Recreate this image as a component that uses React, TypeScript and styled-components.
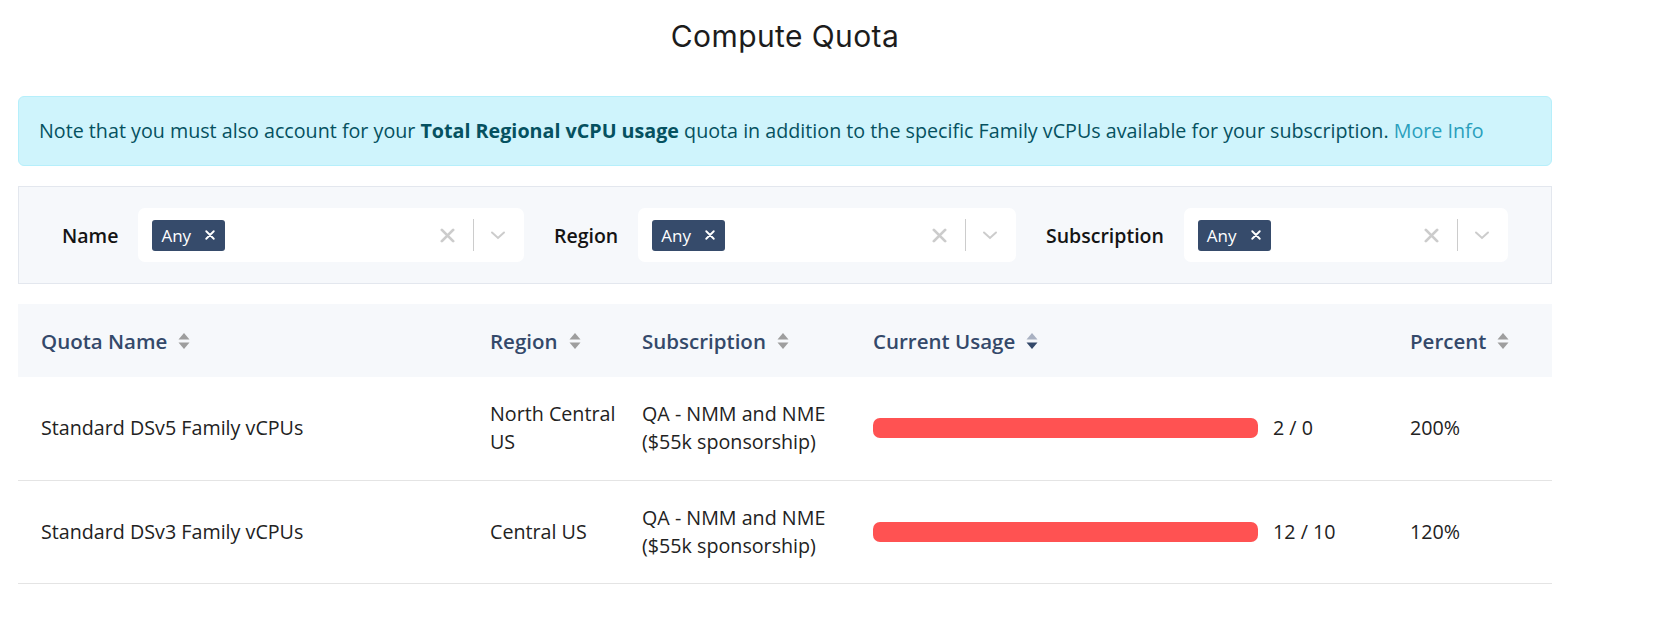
import React from "react";
import styled, { createGlobalStyle } from "styled-components";

const GlobalStyle = createGlobalStyle`
  body {
    margin: 0;
    background: #ffffff;
    font-family: "Open Sans", "Liberation Sans", sans-serif;
    color: #212529;
  }
`;

const Page = styled.div`
  width: 1534px;
  margin-left: 18px;
  padding-top: 16px;
`;

const Title = styled.h1`
  margin: 0 0 40px;
  text-align: center;
  font-family: "Inter", "Noto Sans", sans-serif;
  font-weight: 400;
  font-size: 30px;
  line-height: 40px;
  color: #1c1c1c;
  letter-spacing: 0.4px;
`;

const Alert = styled.div`
  background: #cff4fc;
  border: 1px solid #b6effb;
  border-radius: 6px;
  color: #055160;
  font-size: 19.7px;
  line-height: 28px;
  padding: 20px 20px;
  margin-bottom: 20px;

  strong {
    font-weight: 700;
  }

  a {
    color: #2a9fbc;
    text-decoration: none;
  }
`;

const FilterBar = styled.div`
  display: flex;
  gap: 30px;
  background: #f6f8fb;
  border: 1px solid #e3e7ee;
  padding: 21px 43px;
  margin-bottom: 20px;
`;

const FilterGroup = styled.div`
  flex: 1;
  display: flex;
  align-items: center;
  gap: 20px;
`;

const FilterLabel = styled.label`
  font-size: 19.5px;
  font-weight: 600;
  color: #141414;
  white-space: nowrap;
`;

const SelectBox = styled.div`
  flex: 1;
  height: 54px;
  background: #ffffff;
  border-radius: 7px;
  display: flex;
  align-items: center;
  padding: 0 14px;
  box-sizing: border-box;
`;

const Tag = styled.span`
  display: inline-flex;
  align-items: center;
  gap: 14px;
  height: 31px;
  padding: 0 10px 0 9px;
  background: #364b6b;
  color: #ffffff;
  border-radius: 3px;
  font-size: 17px;
`;

const Spacer = styled.div`
  flex: 1;
`;

const Indicator = styled.span`
  display: inline-flex;
  align-items: center;
  justify-content: center;
  width: 24px;
  color: #cccccc;
`;

const Separator = styled.span`
  width: 1px;
  height: 32px;
  background: #cccccc;
  margin: 0 12px 0 14px;
`;

const Table = styled.table`
  width: 100%;
  table-layout: fixed;
  border-collapse: collapse;
  font-size: 19.7px;
  color: #222222;
`;

const HeadCell = styled.th<{ w?: number }>`
  width: ${({ w }) => (w ? `${w}px` : "auto")};
  box-sizing: border-box;
  background: #f6f8fb;
  height: 73px;
  padding: 0 2px 0 23px;
  text-align: left;
  font-size: 20.5px;
  font-weight: 600;
  color: #34496a;
  white-space: nowrap;
`;

const HeadInner = styled.span`
  display: inline-flex;
  align-items: center;
  gap: 11px;
`;

const Row = styled.tr`
  border-bottom: 1px solid #e4e4e4;
`;

const Cell = styled.td`
  box-sizing: border-box;
  height: 103px;
  padding: 0 2px 0 23px;
  line-height: 28px;
  vertical-align: middle;
`;

const UsageWrap = styled.div`
  display: flex;
  align-items: center;
  gap: 15px;
`;

const Bar = styled.div`
  width: 385px;
  flex-shrink: 0;
  height: 20px;
  border-radius: 7px;
  background: #ff5252;
`;

const Cross = ({ size = 12, color = "currentColor" }: { size?: number; color?: string }) => (
  <svg width={size} height={size} viewBox="0 0 12 12">
    <path d="M1.5 1.5 L10.5 10.5 M10.5 1.5 L1.5 10.5" stroke={color} strokeWidth="2.2" strokeLinecap="round" />
  </svg>
);

const Chevron = () => (
  <svg width="20" height="20" viewBox="0 0 20 20">
    <path d="M4 7.5 L10 13 L16 7.5" stroke="currentColor" strokeWidth="2" fill="none" strokeLinecap="round" />
  </svg>
);

const SortIcon = ({ active }: { active?: boolean }) => (
  <svg width="12" height="18" viewBox="0 0 12 18">
    <path d="M6 1 L11.5 7.5 L0.5 7.5 Z" fill={active ? "#a9b1c2" : "#9e9e9e"} />
    <path d="M6 17 L11.5 10.5 L0.5 10.5 Z" fill={active ? "#34496a" : "#9e9e9e"} />
  </svg>
);

const Filter = ({ label }: { label: string }) => (
  <FilterGroup>
    <FilterLabel>{label}</FilterLabel>
    <SelectBox>
      <Tag>
        Any <Cross size={10} color="#ffffff" />
      </Tag>
      <Spacer />
      <Indicator>
        <Cross size={15} color="#cccccc" />
      </Indicator>
      <Separator />
      <Indicator>
        <Chevron />
      </Indicator>
    </SelectBox>
  </FilterGroup>
);

const rows = [
  {
    name: "Standard DSv5 Family vCPUs",
    region: "North Central US",
    sub: ["QA - NMM and NME", "($55k sponsorship)"],
    usage: "2 / 0",
    pct: "200%",
  },
  {
    name: "Standard DSv3 Family vCPUs",
    region: "Central US",
    sub: ["QA - NMM and NME", "($55k sponsorship)"],
    usage: "12 / 10",
    pct: "120%",
  },
];

const App = () => (
  <>
    <GlobalStyle />
    <Page>
      <Title>Compute Quota</Title>
      <Alert>
        Note that you must also account for your <strong>Total Regional vCPU usage</strong> quota in addition to the
        specific Family vCPUs available for your subscription. <a href="#">More Info</a>
      </Alert>
      <FilterBar>
        <Filter label="Name" />
        <Filter label="Region" />
        <Filter label="Subscription" />
      </FilterBar>
      <Table>
        <thead>
          <tr>
            <HeadCell w={449}>
              <HeadInner>Quota Name <SortIcon /></HeadInner>
            </HeadCell>
            <HeadCell w={152}>
              <HeadInner>Region <SortIcon /></HeadInner>
            </HeadCell>
            <HeadCell w={231}>
              <HeadInner>Subscription <SortIcon /></HeadInner>
            </HeadCell>
            <HeadCell w={537}>
              <HeadInner>Current Usage <SortIcon active /></HeadInner>
            </HeadCell>
            <HeadCell>
              <HeadInner>Percent <SortIcon /></HeadInner>
            </HeadCell>
          </tr>
        </thead>
        <tbody>
          {rows.map((r) => (
            <Row key={r.name}>
              <Cell>{r.name}</Cell>
              <Cell>{r.region}</Cell>
              <Cell>
                {r.sub[0]}
                <br />
                {r.sub[1]}
              </Cell>
              <Cell>
                <UsageWrap>
                  <Bar />
                  {r.usage}
                </UsageWrap>
              </Cell>
              <Cell>{r.pct}</Cell>
            </Row>
          ))}
        </tbody>
      </Table>
    </Page>
  </>
);

export default App;
